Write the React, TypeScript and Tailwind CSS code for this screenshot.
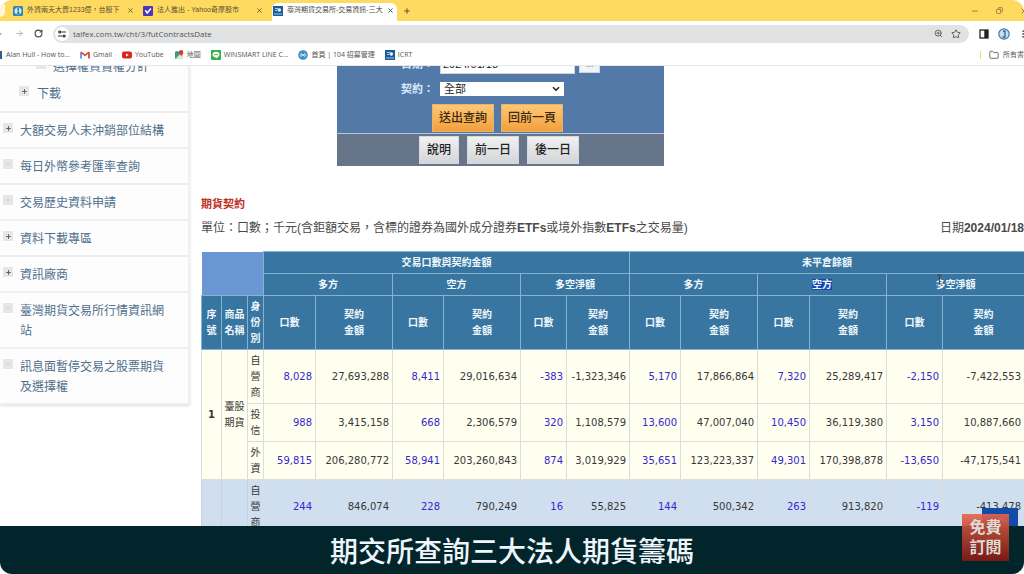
import * as React from "react";
import { useState } from "react";
import {
  ArrowLeft,
  ArrowRight,
  ChevronUp,
  Copy,
  Folder,
  Minus,
  MoreVertical,
  Plus,
  RotateCw,
  Star,
  X,
  ZoomIn,
} from "lucide-react";

const columnWidths = [
  "w-[20px]", "w-[26px]", "w-[16px]",
  "w-[52px]", "w-[77px]", "w-[51px]", "w-[77px]", "w-[46px]", "w-[63px]",
  "w-[51px]", "w-[77px]", "w-[52px]", "w-[77px]", "w-[56px]", "w-[82px]",
];

const txfRows = [
  {
    identity: "自營商",
    values: ["8,028", "27,693,288", "8,411", "29,016,634", "-383", "-1,323,346", "5,170", "17,866,864", "7,320", "25,289,417", "-2,150", "-7,422,553"],
  },
  {
    identity: "投信",
    values: ["988", "3,415,158", "668", "2,306,579", "320", "1,108,579", "13,600", "47,007,040", "10,450", "36,119,380", "3,150", "10,887,660"],
  },
  {
    identity: "外資",
    values: ["59,815", "206,280,772", "58,941", "203,260,843", "874", "3,019,929", "35,651", "123,223,337", "49,301", "170,398,878", "-13,650", "-47,175,541"],
  },
];

const nextRow = {
  identity: "自營商",
  values: ["244", "846,074", "228", "790,249", "16", "55,825", "144", "500,342", "263", "913,820", "-119", "-413,478"],
};

const menuItems = [
  { label: "大額交易人未沖銷部位結構", open: true },
  { label: "每日外幣參考匯率查詢", open: false },
  { label: "交易歷史資料申請", open: false },
  { label: "資料下載專區", open: true },
  { label: "資訊廠商", open: true },
  { label: "臺灣期貨交易所行情資訊網站", open: false },
  { label: "訊息面暫停交易之股票期貨及選擇權", open: false },
];

function TaifexIcon() {
  return (
    <svg viewBox="0 0 10 10" className="size-[10px] shrink-0">
      <rect width="10" height="10" fill="#1c5c96" />
      <path d="M2 2.5h3M2 4.5h2" stroke="#a9d3f0" strokeWidth="1" />
      <circle cx="6.3" cy="4" r="1.8" fill="#e8f3fb" />
      <path d="M1 8h8" stroke="#7fb9e3" strokeWidth="1.2" />
    </svg>
  );
}

function NewsIcon() {
  return (
    <svg viewBox="0 0 10 10" className="size-[10px] shrink-0">
      <rect width="10" height="10" rx="1.5" fill="#2a84b8" />
      <circle cx="5" cy="5" r="3.5" fill="#cfe9f7" />
      <path d="M4 3.2l1.3-.6v4.8M3.8 7.4h2.8" stroke="#256f9d" strokeWidth="1.1" fill="none" />
    </svg>
  );
}

function YahooIcon() {
  return (
    <svg viewBox="0 0 10 10" className="size-[10px] shrink-0">
      <rect width="10" height="10" rx="1" fill="#4b35b8" />
      <path d="M2.3 4.2l2 2.8 3.6-4.5" stroke="#fff" strokeWidth="1.5" fill="none" />
    </svg>
  );
}

function GmailIcon() {
  return (
    <svg viewBox="0 0 10 8" className="h-2 w-[10px] shrink-0">
      <path d="M1 7.5V1.2" stroke="#4285f4" strokeWidth="1.6" />
      <path d="M9 7.5V1.2" stroke="#c5362c" strokeWidth="1.6" />
      <path d="M1 1.2l4 3.3 4-3.3" stroke="#e2493b" strokeWidth="1.7" fill="none" />
    </svg>
  );
}

function YoutubeIcon() {
  return (
    <svg viewBox="0 0 10 8" className="h-2 w-[10px] shrink-0">
      <rect y=".4" width="10" height="7.2" rx="2" fill="#d6271f" />
      <path d="M4 2.4v3.2L6.8 4z" fill="#fff" />
    </svg>
  );
}

function MapsIcon() {
  return (
    <svg viewBox="0 0 10 10" className="size-[10px] shrink-0">
      <rect x="1" y="1.5" width="7.5" height="7.5" rx="1.2" fill="#3fa35b" />
      <path d="M1.5 8.7l6-6 1 1v4.2l-1 1z" fill="#dfe5ea" />
      <path d="M1 5V2.7q0-1.2 1.200-1.200H5z" fill="#3f7de0" />
      <path d="M7.200 6.200C6.500 4.500 5 4 5 2.300a2.200 2.200 0 014.400 0c0 1.700-1.500 2.200-2.200 3.900z" fill="#d93a2f" />
    </svg>
  );
}

function LineIcon() {
  return (
    <svg viewBox="0 0 10 10" className="size-[10px] shrink-0">
      <rect width="10" height="10" rx="1" fill="#37b24a" />
      <path d="M5 1.800c2 0 3.500 1.200 3.500 2.800C8.500 6.300 6 8 5 8.500c.1-.6.1-1-.3-1.100C2.900 7.200 1.500 6.100 1.500 4.600 1.500 3 3 1.800 5 1.800z" fill="#fff" />
      <path d="M3 4.600h4" stroke="#37b24a" strokeWidth=".9" />
    </svg>
  );
}

function JobBankIcon() {
  return (
    <svg viewBox="0 0 10 10" className="size-[10px] shrink-0">
      <circle cx="5" cy="5" r="4.800" fill="#3b8fc0" />
      <path d="M1.500 5h7M2.500 3l5 4M2.500 7l5-4" stroke="#d5ebf7" strokeWidth=".9" />
    </svg>
  );
}

const bookmarks = [
  { label: "Gmail", icon: <GmailIcon /> },
  { label: "YouTube", icon: <YoutubeIcon /> },
  { label: "地圖", icon: <MapsIcon /> },
  { label: "WINSMART LINE C...", icon: <LineIcon /> },
  { label: "首頁 | 104 招募管理", icon: <JobBankIcon /> },
  { label: "ICRT", icon: <TaifexIcon /> },
];

function BrowserTabs() {
  return (
    <div className="flex h-[21px] items-end bg-[#ffda60] text-[7px] text-[#5c5230]">
      <div className="mb-1 h-4 w-[5px] shrink-0 rounded-r-md bg-[#fff6d8]" />
      <div className="flex h-[21px] w-[130px] shrink-0 items-center gap-1 pl-2">
        <NewsIcon />
        <span className="w-[96px] whitespace-nowrap">外資兩天大賣1233億，台股下</span>
        <button type="button" aria-label="關閉分頁"><X size={7} strokeWidth={3} /></button>
      </div>
      <div className="flex h-[21px] w-[137px] shrink-0 items-center gap-1 pl-2">
        <YahooIcon />
        <span className="w-[95px] whitespace-nowrap">法人進出 - Yahoo奇摩股市</span>
        <button type="button" aria-label="關閉分頁"><X size={7} strokeWidth={3} /></button>
      </div>
      <div className="flex h-[18px] w-[125px] shrink-0 items-center gap-1 rounded-t-md bg-white pb-[3px] pl-[1px] text-[#444]">
        <TaifexIcon />
        <span className="w-[96px] whitespace-nowrap">臺灣期貨交易所-交易資訊-三大</span>
        <button type="button" aria-label="關閉分頁"><X size={7} strokeWidth={3} /></button>
      </div>
      <button type="button" aria-label="新分頁" className="ml-[6px] flex h-[21px] items-center"><Plus size={8} strokeWidth={3} /></button>
      <div className="ml-auto flex h-[21px] items-center gap-[17px]">
        <button type="button" aria-label="最小化"><Minus size={8} /></button>
        <button type="button" aria-label="還原"><Copy size={7} className="-scale-x-100" /></button>
        <button type="button" aria-label="關閉" className="-mr-1"><X size={8} /></button>
      </div>
    </div>
  );
}

function AddressBar() {
  const [url, setUrl] = useState("taifex.com.tw/cht/3/futContractsDate");

  return (
    <div className="flex h-[25px] items-center bg-white text-[#444]">
      <button type="button" aria-label="上一頁" className="-ml-[7px]"><ArrowLeft size={10} /></button>
      <button type="button" aria-label="下一頁" className="ml-3 text-gray-400"><ArrowRight size={9} /></button>
      <button type="button" aria-label="重新載入" className="ml-[10px]"><RotateCw size={9} strokeWidth={3} /></button>
      <div className="ml-[10px] flex h-[18px] flex-1 items-center rounded-full bg-[#e1e2e4] pr-2">
        <div className="ml-[2px] flex size-[14px] items-center justify-center rounded-full bg-white">
          <svg viewBox="0 0 8 8" className="size-2" stroke="#333" strokeWidth="1.200" fill="none">
            <circle cx="1.800" cy="2" r="1" />
            <path d="M3.500 2H8M0 6h4.500" />
            <circle cx="6.200" cy="6" r="1" />
          </svg>
        </div>
        <input
          type="text"
          aria-label="網址"
          value={url}
          onChange={(e) => setUrl(e.target.value)}
          className="ml-1 min-w-0 flex-1 bg-transparent font-['Open_Sans',sans-serif] text-[8px] text-[#555] outline-none"
        />
        <button type="button" aria-label="縮放"><ZoomIn size={9} /></button>
        <button type="button" aria-label="加入書籤" className="ml-2"><Star size={10} /></button>
      </div>
      <button type="button" aria-label="側邊面板" className="ml-[10px]">
        <svg viewBox="0 0 10 10" className="size-[10px]">
          <rect x="1" y="1" width="8" height="8" fill="#fff" stroke="#222" strokeWidth="1.300" />
          <path d="M5.300 1H9v8H5.300z" fill="#222" />
        </svg>
      </button>
      <button type="button" aria-label="個人資料" className="ml-[9px]">
        <svg viewBox="0 0 12 12" className="size-3">
          <circle cx="6" cy="6" r="5.200" fill="#c9dff0" stroke="#3e78a6" strokeWidth="1.200" />
          <path d="M5 3.500l2-.5v5.500M4.500 9h3" stroke="#2e6492" strokeWidth="1.300" fill="none" />
        </svg>
      </button>
      <button type="button" aria-label="選單" className="-mr-1 ml-2"><MoreVertical size={10} /></button>
    </div>
  );
}

function BookmarkBar() {
  return (
    <nav className="flex h-5 items-center gap-[10px] overflow-hidden border-b border-gray-200 bg-white pb-px font-['Open_Sans','Noto_Sans_CJK_TC',sans-serif] text-[7px] whitespace-nowrap text-[#555]">
      <a href="#" className="flex items-center gap-1">
        <span className="h-2 w-[2px] bg-[#2e5f86]" />
        Alan Hull - How to...
      </a>
      {bookmarks.map((item) => (
        <a key={item.label} href="#" className="flex items-center gap-[3px]">
          {item.icon}
          {item.label}
        </a>
      ))}
      <div className="ml-auto flex w-11 shrink-0 items-center gap-1 overflow-hidden">
        <span className="mr-1 h-2 w-px shrink-0 bg-[#f5d675]" />
        <Folder size={10} className="shrink-0" />
        <span>所有書籤</span>
      </div>
    </nav>
  );
}

function ToggleBox({ open }: { open: boolean }) {
  return (
    <button
      type="button"
      aria-label={open ? "展開" : "收合"}
      className="mt-[2px] flex size-[10px] shrink-0 items-center justify-center bg-[#e6e6e6] text-[#555]"
    >
      {open ? <Plus size={7} strokeWidth={3} /> : <Minus size={4} className="text-gray-400" />}
    </button>
  );
}

function SideMenu() {
  return (
    <aside className="w-[190px] shrink-0 self-start border-r-2 border-[#efefef] bg-[#fdfdfe] text-[12px] leading-5 text-[#4f6f8b] shadow-sm">
      <div className="-mt-[9px] border-b-2 border-[#efefef] pb-[7px]">
        <div className="flex gap-[7px] pl-9">
          <ToggleBox open={false} />
          <a href="#">選擇權買賣權分計</a>
        </div>
        <div className="mt-[7px] flex gap-2 pl-[19px]">
          <ToggleBox open />
          <a href="#">下載</a>
        </div>
      </div>
      <ul>
        {menuItems.map((item) => (
          <li key={item.label} className="flex gap-[7px] border-b-2 border-[#efefef] pt-2 pr-5 pb-[6px] pl-[3px]">
            <ToggleBox open={item.open} />
            <a href="#">{item.label}</a>
          </li>
        ))}
      </ul>
    </aside>
  );
}

function QueryForm() {
  const [date, setDate] = useState("2024/01/18");
  const [contract, setContract] = useState("all");

  const orangeButton =
    "h-7 border border-[#e8b26a] bg-gradient-to-b from-[#ffc774] to-[#f2a03a] px-[6px] text-[12px] font-medium text-[#3a2a10]";
  const grayButton =
    "h-7 border border-[#d5d8dc] bg-gradient-to-b from-[#f1f1f2] to-[#d3d5d8] px-[7px] text-[12px] font-medium text-[#222]";

  return (
    <form onSubmit={(e) => e.preventDefault()} className="-mt-3 ml-[136px] w-[327px] bg-[#5379a8]">
      <div className="flex h-5 items-center">
        <label htmlFor="date" className="w-[103px] pr-[6px] text-right text-[11px] font-bold text-[#d5eaf8]">日期：</label>
        <input
          type="text"
          id="date"
          value={date}
          onChange={(e) => setDate(e.target.value)}
          className="h-5 w-[135px] border border-gray-300 bg-white px-[2px] text-[11px] text-[#222]"
        />
        <button type="button" aria-label="選擇日期" className="ml-1 h-[18px] w-[21px] border border-gray-300 bg-gray-100 text-[9px] leading-none text-gray-500">...</button>
      </div>
      <div className="mt-2 flex items-center">
        <label htmlFor="contract" className="w-[103px] pr-[6px] text-right text-[11px] leading-[14px] font-bold text-[#d5eaf8]">契約：</label>
        <div className="relative">
          <select
            id="contract"
            value={contract}
            onChange={(e) => setContract(e.target.value)}
            className="block h-[14px] w-[124px] appearance-none bg-white px-1 text-[11px] leading-[14px] text-[#222]"
          >
            <option value="all">全部</option>
          </select>
          <svg viewBox="0 0 8 6" className="pointer-events-none absolute top-1 right-1 h-[6px] w-2">
            <path d="M1 1.200l3 3 3-3" stroke="#222" strokeWidth="1.600" fill="none" />
          </svg>
        </div>
      </div>
      <div className="mt-2 flex gap-[7px] pb-[1px] pl-[95px]">
        <button type="submit" className={orangeButton}>送出查詢</button>
        <button type="button" className={orangeButton}>回前一頁</button>
      </div>
      <div className="flex gap-2 border-t border-[#b8c8d8] bg-[#66758a] py-[2px] pl-[82px]">
        <button type="button" className={grayButton}>說明</button>
        <button type="button" className={grayButton}>前一日</button>
        <button type="button" className={grayButton}>後一日</button>
      </div>
    </form>
  );
}

function ValueCells({ values }: { values: string[] }) {
  return (
    <>
      {values.map((value, i) => (
        <td
          key={i}
          className={
            i % 2 === 0
              ? "border-r border-b border-[#dcdcdc] pr-[3px] text-right text-[#3527cf]"
              : "border-r border-b border-[#dcdcdc] pr-[3px] text-right text-[#383838]"
          }
        >
          {value}
        </td>
      ))}
    </>
  );
}

function ContractsTable() {
  const head = "border border-[#86b3d0] p-0 font-bold";
  const identity = "border border-[#dcdcdc] px-[2px] py-0 text-center";

  return (
    <table className="w-full table-fixed border-collapse font-['DejaVu_Sans','Noto_Sans_CJK_TC',sans-serif] text-[10px] leading-4 text-[#383838]">
      <colgroup>
        {columnWidths.map((width, i) => (
          <col key={i} className={width} />
        ))}
      </colgroup>
      <thead className="bg-[#3876a1] text-[#f0f8fd]">
        <tr className="h-[22px]">
          <th colSpan={3} rowSpan={2} className="bg-[#6a97d3]" />
          <th colSpan={6} className={head}>交易口數與契約金額</th>
          <th colSpan={6} className={head}>未平倉餘額</th>
        </tr>
        <tr className="h-[22px]">
          <th colSpan={2} className={head}>多方</th>
          <th colSpan={2} className={head}>空方</th>
          <th colSpan={2} className={head}>多空淨額</th>
          <th colSpan={2} className={head}>多方</th>
          <th colSpan={2} className={head}><span className="bg-[#1747b3]">空方</span></th>
          <th colSpan={2} className={head}>
            <span className="relative">
              多空淨額
              <svg viewBox="0 0 7 11" className="absolute -top-[5px] left-0 h-[11px] w-[7px]">
                <path d="M1 1h5M3.500 1v9M1 10h5" stroke="#444" strokeWidth="1.200" />
              </svg>
            </span>
          </th>
        </tr>
        <tr className="h-[54px]">
          <th className={head}>序<br />號</th>
          <th className={head}>商品<br />名稱</th>
          <th className={head}>身<br />份<br />別</th>
          {[0, 1, 2, 3, 4, 5].map((i) => (
            <React.Fragment key={i}>
              <th className={head}>口數</th>
              <th className={head}>契約<br />金額</th>
            </React.Fragment>
          ))}
        </tr>
      </thead>
      <tbody>
        {txfRows.map((row, i) => (
          <tr key={row.identity} className={i === 0 ? "h-[54px] bg-[#fffff0]" : "h-[38px] bg-[#fffff0]"}>
            {i === 0 && (
              <>
                <td rowSpan={3} className="border border-[#dcdcdc] p-0 text-center font-bold">1</td>
                <td rowSpan={3} className="border border-[#dcdcdc] p-0 text-center">臺股<br />期貨</td>
              </>
            )}
            <td className={identity}>{row.identity}</td>
            <ValueCells values={row.values} />
          </tr>
        ))}
        <tr className="h-[54px] bg-[#d0dfef]">
          <td className="border border-[#c8d4e0]" />
          <td className="border border-[#c8d4e0]" />
          <td className={identity}>{nextRow.identity}</td>
          <ValueCells values={nextRow.values} />
        </tr>
      </tbody>
    </table>
  );
}

export default function App() {
  return (
    <div className="flex h-screen flex-col overflow-hidden rounded-xl bg-white font-['Liberation_Sans','Noto_Sans_CJK_TC',sans-serif]">
      <header>
        <BrowserTabs />
        <AddressBar />
        <BookmarkBar />
      </header>

      {/* Web page, scrolled part of the way down */}
      <div className="relative flex min-h-0 flex-1 overflow-hidden">
        <SideMenu />
        <main className="min-w-0 flex-1 pl-[11px]">
          <QueryForm />
          <h1 className="mt-7 text-[11px] leading-5 font-bold text-[#c0311f]">期貨契約</h1>
          <div className="mt-1 mb-[13px] flex justify-between text-[12px] leading-5 whitespace-nowrap text-[#4a4a4a]">
            <p>
              單位：口數；千元(含鉅額交易，含標的證券為國外成分證券<b>ETFs</b>或境外指數<b>ETFs</b>之交易量)
            </p>
            <p>
              日期<b>2024/01/18</b>
            </p>
          </div>
          <ContractsTable />
        </main>
        <a href="#" aria-label="回頂端" className="absolute right-[6px] -bottom-[18px] flex h-9 w-9 justify-center bg-[#124ba8] pt-[5px] text-[#8fb2e5]">
          <ChevronUp size={14} />
        </a>
      </div>

      <footer className="relative flex h-12 shrink-0 items-center justify-center bg-[#02252b] pt-[6px] text-[28px] font-medium text-[#eef5fb]">
        期交所查詢三大法人期貨籌碼
        <button
          type="button"
          className="absolute right-[15px] bottom-[13px] size-[47px] bg-gradient-to-b from-[#e8634c]/90 to-[#7d1a14]/95 text-[16px] leading-5 font-bold text-[#dcdcd6]"
        >
          免費<br />訂閱
        </button>
      </footer>
    </div>
  );
}
